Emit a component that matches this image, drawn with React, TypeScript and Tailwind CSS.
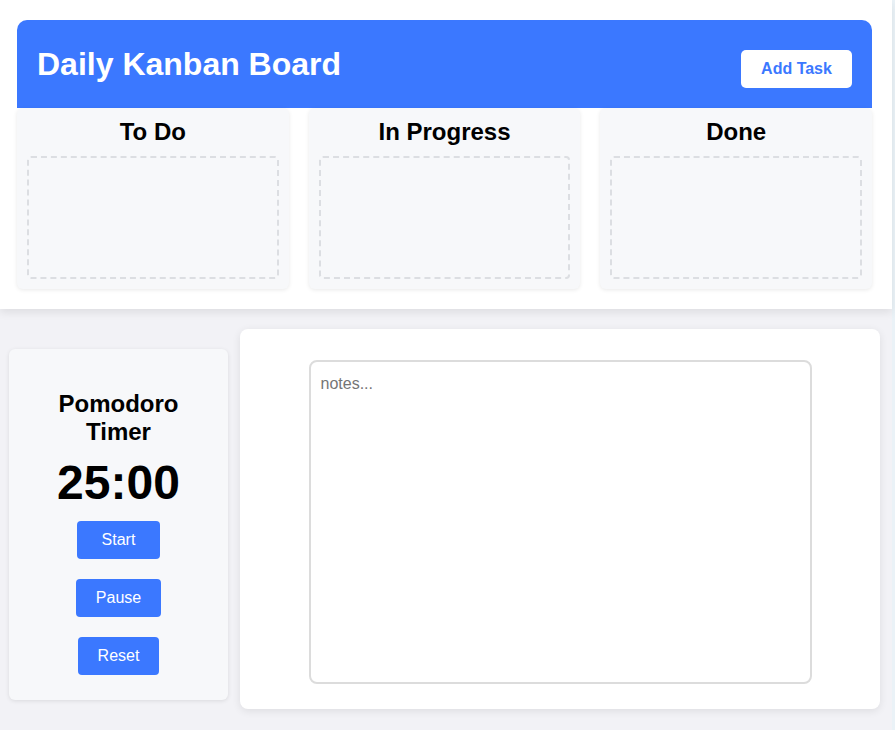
import React, { useState } from 'react';

const columns = ['To Do', 'In Progress', 'Done'];

const timerButtons = [
  { label: 'Start', width: 'w-[83px]' },
  { label: 'Pause', width: 'w-[85px]' },
  { label: 'Reset', width: 'w-[81px]' },
];

export default function App() {
  const [notes, setNotes] = useState('');

  return (
    <div className="flex min-h-[730px] bg-[#eaf2f7] font-['Liberation_Sans',Arial,sans-serif]">
      <div className="w-[892px] bg-[#f2f2f6]">
        {/* kanban board */}
        <section className="bg-white pt-5 pb-5 pl-[17px] pr-5 shadow-[0_4px_8px_rgba(0,0,0,0.08)]">
          <header className="flex h-[88px] items-start justify-between rounded-t-[10px] bg-[#3b78ff] px-5">
            <h1 className="mt-[26px] text-[32px] leading-[37px] font-bold text-white">Daily Kanban Board</h1>
            <button className="mt-[30px] h-[38px] w-[111px] rounded-[5px] bg-white text-base font-bold text-[#3b78ff]">
              Add Task
            </button>
          </header>
          <div className="grid grid-cols-3 gap-5">
            {columns.map((col) => (
              <div
                key={col}
                className="rounded-md bg-[#f7f8fa] p-[10px] shadow-[0_1px_4px_rgba(0,0,0,0.09)]"
              >
                <h2 className="mb-[10px] text-center text-2xl leading-[28px] font-bold text-black">{col}</h2>
                <div className="h-[123px] rounded border-2 border-dashed border-[#dcdee2]" />
              </div>
            ))}
          </div>
        </section>

        <div className="flex items-start gap-3 pt-5 pl-[9px] pr-3">
          {/* pomodoro */}
          <div className="mt-5 flex w-[219px] flex-col items-center rounded-md bg-[#f7f8fa] px-[30px] pt-[41px] pb-[25px] shadow-[0_1px_4px_rgba(0,0,0,0.1)]">
            <h2 className="text-center text-2xl leading-[28px] font-bold text-black">Pomodoro Timer</h2>
            <div className="mt-[9px] text-[48px] leading-[55px] font-bold text-black">25:00</div>
            <div className="mt-[11px] flex flex-col items-center gap-5">
              {timerButtons.map((b) => (
                <button
                  key={b.label}
                  className={`${b.width} h-[38px] rounded bg-[#3b78ff] text-base text-white`}
                >
                  {b.label}
                </button>
              ))}
            </div>
          </div>

          {/* notes */}
          <div className="flex-1 rounded-lg bg-white pt-[31px] pb-[25px] shadow-[0_2px_8px_rgba(0,0,0,0.09)]">
            <textarea
              value={notes}
              onChange={(e) => setNotes(e.target.value)}
              placeholder="notes..."
              className="mx-auto block h-[324px] w-[503px] resize-none rounded-lg border-2 border-[#dcdcdc] p-[10px] text-base text-black outline-none placeholder:text-[#757575]"
            />
          </div>
        </div>
      </div>
    </div>
  );
}
